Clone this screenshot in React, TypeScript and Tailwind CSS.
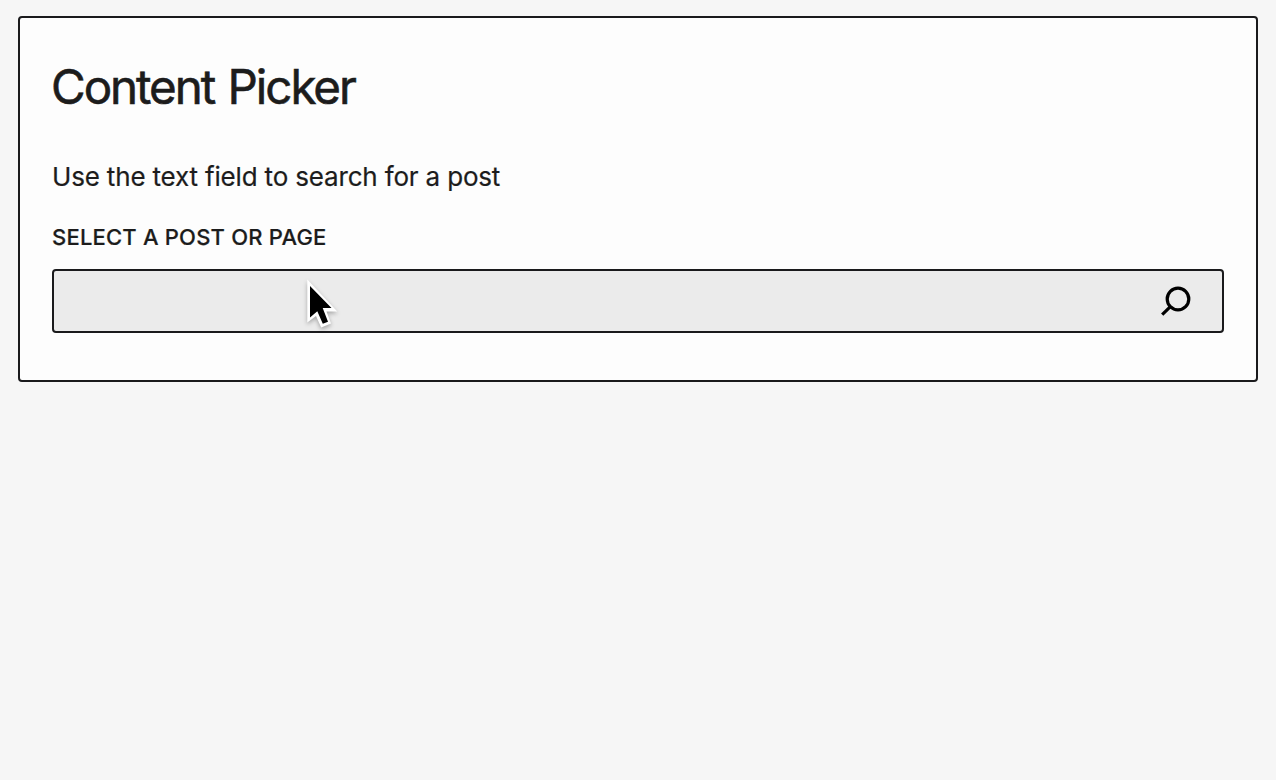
export default function App() {
  return (
    <main className="h-screen overflow-hidden bg-[#f6f6f6] px-[18px] pt-4 font-['Inter',sans-serif] text-[#1c1c1c]">
      <section className="h-[366px] rounded-[4px] border-2 border-[#1a1a1c] bg-[#fdfdfd] px-8 pt-[42px]">
        <h1 className="-ml-px h-14 w-max text-[47.5px] leading-[53px] tracking-[-2.05px] [word-spacing:2px] [-webkit-text-stroke:0.6px_#1c1c1c]">Content Picker</h1>
        <p className="mt-[43px] h-9 w-max text-[26px] leading-9 tracking-[-0.17px] [-webkit-text-stroke:0.2px_#1c1c1c]">Use the text field to search for a post</p>
        <label htmlFor="post-search" className="mt-[28px] block h-7 w-max text-[22px] leading-7 font-medium tracking-[0.2px] uppercase [-webkit-text-stroke:0.2px_#1c1c1c]">Select a post or page</label>
        <div className="relative mt-[18px] flex h-16 items-center rounded-[4px] border-2 border-[#1a1a1c] bg-[#ebebeb] pr-[30px]">
          <input id="post-search" className="h-full min-w-0 flex-1 bg-transparent px-4 outline-none" />
          <svg className="h-8 w-8" viewBox="0 0 32 32" fill="none" stroke="#000" strokeWidth="3.2">
            <circle cx="18" cy="14" r="10.8" />
            <path d="M10.4 21.6 L2.2 29.7" />
          </svg>
          <svg className="absolute top-[5px] left-[250px] h-[56px] w-[40px] drop-shadow-[0_2px_2px_rgba(0,0,0,0.3)]" viewBox="0 0 40 56">
            <path d="M3.3 3.5 V46.5 L12 40 L17.2 51.5 L27 47.5 L22.5 35.5 H33.3 Z" fill="#fff" />
            <path d="M6 10 V41.5 L13.3 35.2 L18.8 47.8 L24 45.8 L18.7 32 H27.5 Z" fill="#000" />
          </svg>
        </div>
      </section>
    </main>
  );
}
